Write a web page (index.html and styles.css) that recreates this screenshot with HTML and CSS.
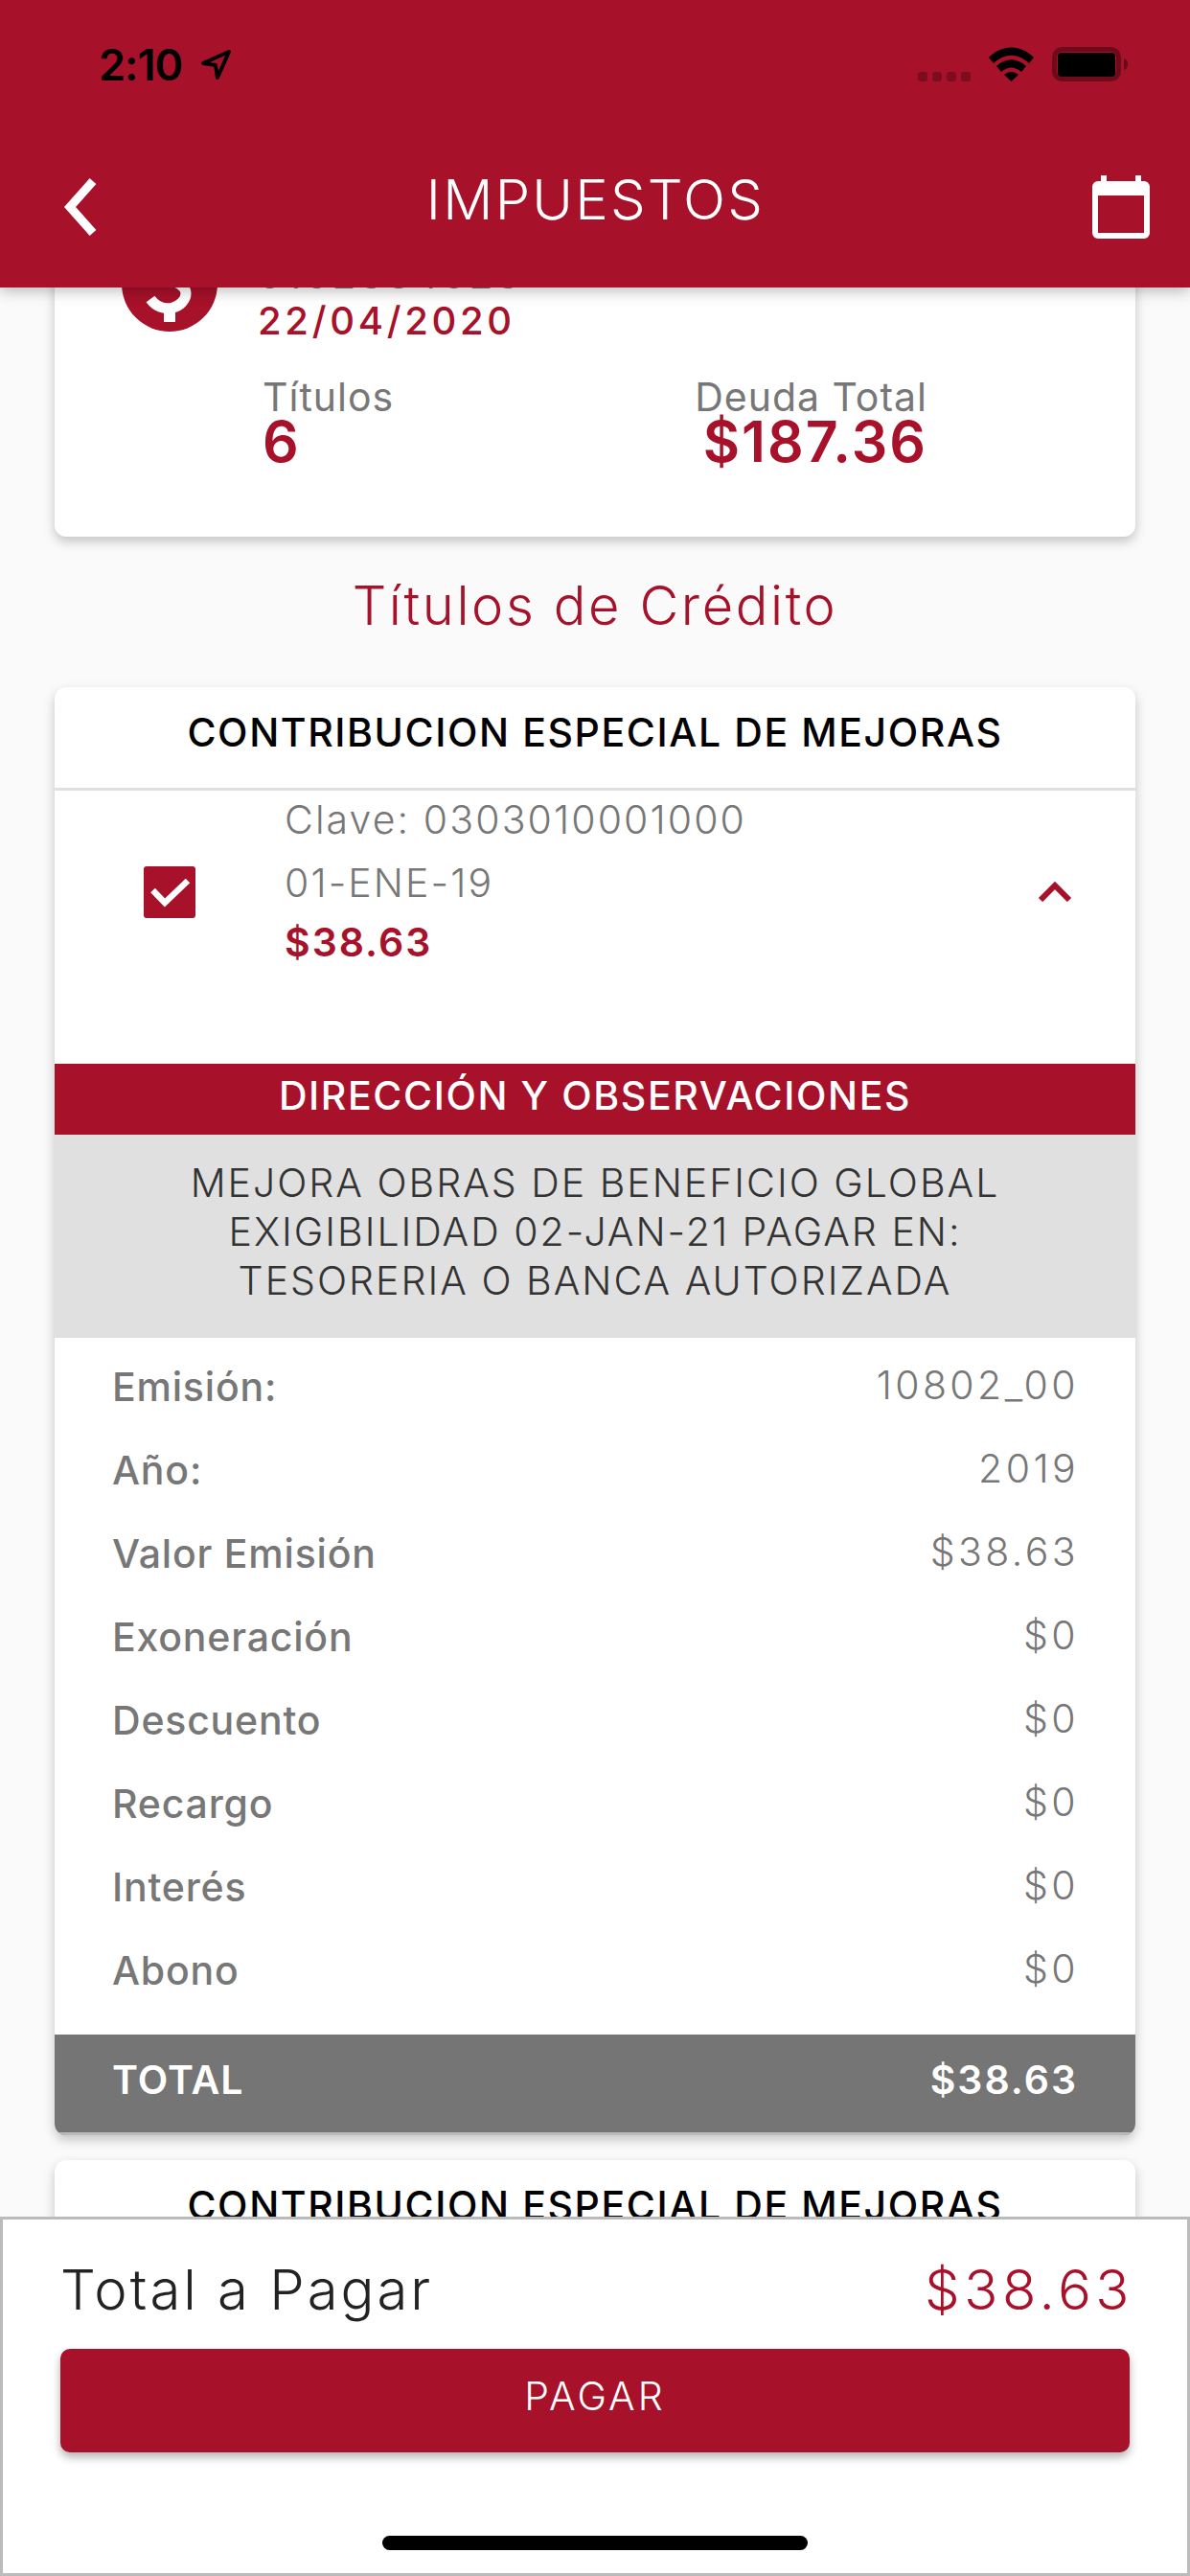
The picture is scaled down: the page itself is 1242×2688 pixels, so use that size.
FILE: index.html
```html
<!DOCTYPE html>
<html lang="es">
<head>
<meta charset="utf-8">
<title>Impuestos</title>
<link rel="stylesheet" href="styles.css">
</head>
<body>
<div class="app">
  <header class="appbar">
    <div class="status">
      <div class="status-left">
        <span class="time">2:10</span>
        <svg class="arrow" viewBox="0 0 31 31"><path d="M29 2 2 14l13 2 2 13z" fill="none" stroke="#000" stroke-width="4" stroke-linejoin="round"/></svg>
      </div>
      <div class="status-right">
        <div class="signal"><i></i><i></i><i></i><i></i></div>
        <svg class="wifi" viewBox="0 0 47 36"><path d="M0 11C14-3 33-3 47 11l-5 6C30 6 17 6 5 17z"/><path d="M8 20c10-9 21-9 31 0l-5 6c-7-6-14-6-21 0z"/><path d="M16 29c5-4 10-4 15 0l-7.500 7z"/></svg>
        <svg class="battery" viewBox="0 0 79 36"><rect x="2.500" y="2.500" width="67" height="31" rx="8" fill="none" stroke="#000" stroke-opacity=".35" stroke-width="5"/><rect x="6" y="6" width="60" height="25" rx="4"/><path d="M75 12c3 1 4 3 4 6s-1 5-4 6z" fill-opacity=".4"/></svg>
      </div>
    </div>
    <div class="navbar">
      <svg class="back" viewBox="0 0 37 60"><path d="M31 3 7 30l24 27" fill="none" stroke="#fff" stroke-width="9"/></svg>
      <h1 class="nav-title">IMPUESTOS</h1>
      <svg class="calendar" viewBox="0 0 60 66"><path d="M9 0h6v6h30V0h6v6h3a6 6 0 0 1 6 6v48a6 6 0 0 1-6 6H6a6 6 0 0 1-6-6V12a6 6 0 0 1 6-6h3zM6 21v39h48V21z" fill="#fff" fill-rule="evenodd"/></svg>
    </div>
  </header>

  <main class="scroll">
    <section class="card summary">
      <div class="summary-head">
        <svg class="coin" viewBox="0 0 100 100"><circle cx="50" cy="50" r="50" fill="#a8112a"/><path d="M66 22C50 10 32 20 32 32c0 14 34 12 35 28 0 14-24 24-37 6" fill="none" stroke="#fff" stroke-width="11"/><path d="M44 72h12v18H44z" fill="#fff"/></svg>
        <div class="summary-id">
          <div class="summary-num">0102884328</div>
          <div class="summary-date">22/04/2020</div>
        </div>
      </div>
      <div class="summary-stats">
        <div class="stat"><span class="stat-label">Títulos</span><span class="stat-value">6</span></div>
        <div class="stat stat-right"><span class="stat-label">Deuda Total</span><span class="stat-value">$187.36</span></div>
      </div>
    </section>

    <h2 class="section-title">Títulos de Crédito</h2>

    <section class="card titulo">
      <div class="titulo-head">CONTRIBUCION ESPECIAL DE MEJORAS</div>
      <div class="titulo-row">
        <div class="check"><svg viewBox="0 0 54 54"><path d="M9.500 25 22 38l24-23" fill="none" stroke="#fff" stroke-width="6.500"/></svg></div>
        <div class="titulo-info">
          <div class="titulo-line">Clave: 0303010001000</div>
          <div class="titulo-line">01-ENE-19</div>
          <div class="titulo-amount">$38.63</div>
        </div>
        <svg class="chev" viewBox="0 0 36 22"><path d="M3 20 18 5l15 15" fill="none" stroke="#a8112a" stroke-width="6"/></svg>
      </div>
      <div class="band-red">DIRECCIÓN Y OBSERVACIONES</div>
      <div class="band-grey">MEJORA OBRAS DE BENEFICIO GLOBAL<br>EXIGIBILIDAD 02-JAN-21 PAGAR EN:<br>TESORERIA O BANCA AUTORIZADA</div>
      <dl class="details">
        <div class="detail"><dt>Emisión:</dt><dd>10802_00</dd></div>
        <div class="detail"><dt>Año:</dt><dd>2019</dd></div>
        <div class="detail"><dt>Valor Emisión</dt><dd>$38.63</dd></div>
        <div class="detail"><dt>Exoneración</dt><dd>$0</dd></div>
        <div class="detail"><dt>Descuento</dt><dd>$0</dd></div>
        <div class="detail"><dt>Recargo</dt><dd>$0</dd></div>
        <div class="detail"><dt>Interés</dt><dd>$0</dd></div>
        <div class="detail"><dt>Abono</dt><dd>$0</dd></div>
      </dl>
      <div class="band-total"><span class="total-label">TOTAL</span><span class="total-value">$38.63</span></div>
    </section>

    <section class="card titulo">
      <div class="titulo-head">CONTRIBUCION ESPECIAL DE MEJORAS</div>
    </section>
  </main>

  <footer class="paybar">
    <div class="pay-total"><span class="pay-label">Total a Pagar</span><span class="pay-value">$38.63</span></div>
    <button class="pay-btn">PAGAR</button>
    <div class="home-bar"></div>
  </footer>
</div>
</body>
</html>
```

FILE: styles.css
```css
* { box-sizing: border-box; margin: 0; padding: 0; }
html, body { width: 1242px; height: 2688px; overflow: hidden; }
body { background: #fafafa; font-family: "Inter", "Liberation Sans", sans-serif; color: #777; }
.app { position: relative; width: 1242px; height: 2688px; overflow: hidden; }

.appbar { position: absolute; top: 0; left: 0; width: 100%; height: 300px; background: #a8112a; z-index: 2; box-shadow: 0 4px 14px rgba(0,0,0,.25); }
.status { height: 134px; display: flex; justify-content: space-between; padding: 49px 65px 0 103px; }
.status-left { display: flex; align-items: flex-start; }
.time { font-size: 45px; font-weight: 600; line-height: 38px; color: #000; letter-spacing: -1px; width: 107px; }
.arrow { width: 31px; height: 31px; margin-top: 3px; }
.status-right { display: flex; align-items: flex-start; }
.signal { display: flex; gap: 5px; margin-top: 26px; margin-right: 19px; }
.signal i { display: block; width: 10px; height: 10px; border-radius: 3px; background: rgba(0,0,0,.25); }
.wifi { width: 47px; height: 36px; margin-right: 19px; }
.battery { width: 79px; height: 36px; }

.navbar { display: flex; align-items: flex-start; justify-content: space-between; padding: 49px 42px 0 66px; }
.back { width: 37px; height: 60px; margin-top: 3px; }
.nav-title { font-size: 58px; font-weight: 300; color: #fff; line-height: 50px; letter-spacing: 2.200px; }
.calendar { width: 60px; height: 66px; }

.scroll { display: flex; flex-direction: column; padding: 0 57px; margin-top: 226px; }
.card { background: #fff; border-radius: 12px; box-shadow: 0 5px 12px rgba(0,0,0,.22); overflow: hidden; }

.summary { height: 334px; padding: 20px 0 0 70px; flex: none; }
.summary-head { display: flex; gap: 42px; }
.coin { width: 100px; height: 100px; flex: none; }
.summary-num { font-size: 40px; line-height: 48px; color: #777; margin-top: 17px; letter-spacing: 3.700px; }
.summary-date { font-size: 40px; font-weight: 500; line-height: 48px; color: #a8112a; letter-spacing: 3.700px; }
.summary-stats { display: flex; justify-content: space-between; padding: 33px 217px 0 147px; }
.stat { display: flex; flex-direction: column; }
.stat-right { align-items: flex-end; }
.stat-label { font-size: 41px; line-height: 44px; color: #777; letter-spacing: 1px; }
.stat-value { font-size: 59px; font-weight: 600; line-height: 50px; color: #a8112a; letter-spacing: 2px; }

.section-title { font-size: 56px; font-weight: 300; color: #a8112a; text-align: center; line-height: 70px; letter-spacing: 2.600px; margin: 37px 0 50px; }

.titulo { margin-bottom: 26px; flex: none; }
.titulo-head { height: 108px; border-bottom: 3px solid #e0e0e0; font-size: 41px; font-weight: 500; color: #000; text-align: center; line-height: 94px; letter-spacing: 1.600px; }
.titulo-row { height: 285px; display: flex; align-items: flex-start; padding-left: 93px; }
.check { width: 54px; height: 54px; background: #a8112a; border-radius: 3px; margin-top: 79px; flex: none; }
.check svg { display: block; width: 54px; height: 54px; }
.titulo-info { margin-left: 93px; flex: 1; }
.titulo-line { font-size: 41px; font-weight: 300; line-height: 60px; margin-bottom: 6px; color: #777; letter-spacing: 2.100px; }
.titulo-amount { font-size: 41px; font-weight: 600; line-height: 52px; color: #a8112a; letter-spacing: 2px; }
.chev { width: 36px; height: 22px; margin: 94px 66px 0 0; flex: none; }
.band-red { height: 74px; background: #a8112a; color: #fff; font-size: 41px; font-weight: 500; text-align: center; line-height: 66px; letter-spacing: 1.600px; }
.band-grey { height: 212px; background: #e0e0e0; color: #333; font-size: 41px; font-weight: 300; text-align: center; line-height: 51px; padding-top: 25px; letter-spacing: 2px; }
.details { padding: 7px 62px 0 60px; height: 727px; }
.detail { display: flex; justify-content: space-between; align-items: center; height: 87px; }
.detail dt { font-size: 41px; font-weight: 500; color: #777; letter-spacing: .8px; }
.detail dd { font-size: 41px; font-weight: 300; color: #777; letter-spacing: 3.400px; margin: -4px -3px 0 0; }
.band-total { height: 105px; background: #757575; border-bottom: 3px solid #bbb; color: #fff; font-size: 41px; font-weight: 600; display: flex; justify-content: space-between; align-items: center; padding: 0 62px 8px 60px; }
.total-label { letter-spacing: 1px; }
.total-value { letter-spacing: 2px; margin-right: -2px; }

.paybar { position: absolute; left: 0; top: 2313px; width: 1242px; height: 375px; background: #fff; border: 3px solid #bbb; z-index: 2; padding: 0 60px; display: flex; flex-direction: column; }
.pay-total { display: flex; justify-content: space-between; align-items: center; height: 135px; padding-top: 10px; }
.pay-label { font-size: 58px; font-weight: 300; color: #222; letter-spacing: 3px; }
.pay-value { font-size: 58px; font-weight: 300; color: #a8112a; letter-spacing: 4.500px; margin-right: -4px; }
.pay-btn { height: 108px; border: 0; border-radius: 10px; background: #a8112a; color: #fff; font: 300 41px "Inter", sans-serif; letter-spacing: 3px; padding-bottom: 10px; box-shadow: 0 5px 10px rgba(0,0,0,.3); flex: none; }
.home-bar { width: 444px; height: 15px; border-radius: 8px; background: #000; margin: 87px auto 0; flex: none; }
```
